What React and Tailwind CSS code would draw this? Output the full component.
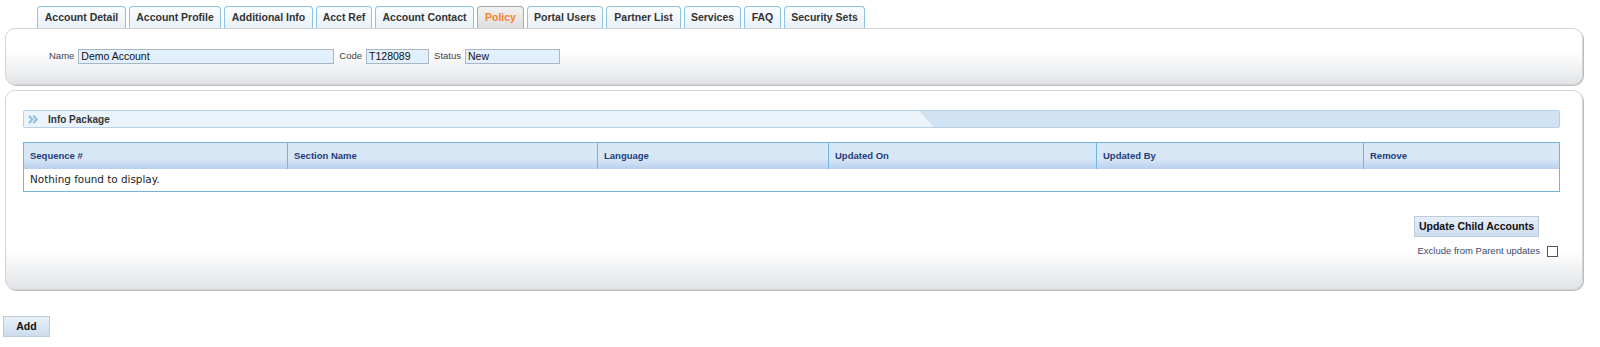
import React from 'react';

const tabs = [
  { label: 'Account Detail', w: 'w-[89px]' },
  { label: 'Account Profile', w: 'w-[92px]' },
  { label: 'Additional Info', w: 'w-[89px]' },
  { label: 'Acct Ref', w: 'w-[56px]' },
  { label: 'Account Contact', w: 'w-[99px]' },
  { label: 'Policy', w: 'w-[47px]', active: true },
  { label: 'Portal Users', w: 'w-[76px]' },
  { label: 'Partner List', w: 'w-[75px]' },
  { label: 'Services', w: 'w-[57px]' },
  { label: 'FAQ', w: 'w-[37px]' },
  { label: 'Security Sets', w: 'w-[81px]' },
];

const columns = [
  { label: 'Sequence #', w: 'w-[264px]' },
  { label: 'Section Name', w: 'w-[310px]' },
  { label: 'Language', w: 'w-[231px]' },
  { label: 'Updated On', w: 'w-[268px]' },
  { label: 'Updated By', w: 'w-[267px]' },
  { label: 'Remove', w: '' },
];

function Chevrons() {
  return (
    <svg width="10" height="9" viewBox="0 0 10 9" className="shrink-0">
      <path d="M1 0.8 L4.2 4.5 L1 8.2" fill="none" stroke="#8cc2e2" strokeWidth="2.2" />
      <path d="M5.4 0.8 L8.6 4.5 L5.4 8.2" fill="none" stroke="#8cc2e2" strokeWidth="2.2" />
    </svg>
  );
}

function Field({ label, value, width }) {
  return (
    <>
      <span className="text-[9.5px] text-[#444] mr-[4px]">{label}</span>
      <div className={`${width} h-[15px] bg-[#e2effc] border border-[#a9b6c3] flex items-center px-[2px] text-[10.5px] text-[#111] leading-none mr-[5px]`}>
        {value}
      </div>
    </>
  );
}

export default function App() {
  return (
    <div className="w-full h-[347px] bg-white font-['Liberation_Sans',Arial,sans-serif] overflow-hidden">
      {/* Tabs */}
      <div className="flex gap-[3px] pl-[37px] pt-[6px]">
        {tabs.map((t) => (
          <div
            key={t.label}
            className={`${t.w} h-[22px] flex items-center justify-center rounded-t-[4px] border border-b-0 text-[10.5px] font-bold whitespace-nowrap ${
              t.active
                ? 'bg-linear-to-b from-[#f2f2f2] to-[#dedede] border-[#a8a8a8] text-[#f4822e]'
                : 'bg-linear-to-b from-[#fbfdff] to-[#e9f1f8] border-[#8dc2e4] text-[#333]'
            }`}
          >
            {t.label}
          </div>
        ))}
      </div>

      {/* Account header panel */}
      <div className="ml-[5px] w-[1578px] h-[57px] rounded-[10px] border border-[#d3d3d3] bg-linear-to-b from-white from-40% to-[#e1e4e7] shadow-[1px_1px_0_#bdbdbd] pl-[43px] pt-[20px]">
        <div className="flex items-center">
          <Field label="Name" value="Demo Account" width="w-[256px]" />
          <Field label="Code" value="T128089" width="w-[63px]" />
          <Field label="Status" value="New" width="w-[95px]" />
        </div>
      </div>

      {/* Info package panel */}
      <div className="ml-[5px] mt-[5px] w-[1578px] h-[200px] rounded-[10px] border border-[#d3d3d3] bg-linear-to-b from-white from-[80%] to-[#e1e4e7] shadow-[1px_1px_0_#bdbdbd] pl-[17px] pr-[22px] pt-[19px]">
        <div className="flex h-[18px] border border-[#b6d0e8] rounded-[2px] bg-[#d1e2f2] overflow-hidden">
          <div className="w-[895px] bg-[#ebf3fb] flex items-center gap-[10px] pl-[4px]">
            <Chevrons />
            <span className="text-[10px] font-bold text-[#333]">Info Package</span>
          </div>
          <svg width="15" height="16" viewBox="0 0 15 16" className="shrink-0">
            <polygon points="0,0 15,16 0,16" fill="#ebf3fb" />
          </svg>
          <div className="flex-1" />
        </div>

        <table className="mt-[14px] w-full table-fixed border-collapse border border-[#72b3df]">
          <thead>
            <tr className="h-[26px] bg-linear-to-b from-[#d8e7f6] from-60% to-[#b8d0ee]">
              {columns.map((c) => (
                <th
                  key={c.label}
                  className={`${c.w} border-l border-[#72b3df] first:border-l-0 text-left pl-[6px] text-[9.5px] font-bold text-[#1e3b7c]`}
                >
                  {c.label}
                </th>
              ))}
            </tr>
          </thead>
          <tbody>
            <tr className="h-[23px] bg-white">
              <td colSpan={6} className="pl-[6px] text-[10.4px] text-[#222] font-['DejaVu_Sans',Verdana,sans-serif]">
                Nothing found to display.
              </td>
            </tr>
          </tbody>
        </table>

        <div className="flex justify-end mt-[24px] mr-[21px]">
          <button className="w-[125px] h-[21px] border border-[#bccbd9] bg-linear-to-b from-[#e8f0f8] to-[#ccdcee] text-[10.5px] font-bold text-[#111]">
            Update Child Accounts
          </button>
        </div>
        <div className="flex justify-end items-center mt-[7px] mr-[2px]">
          <span className="text-[9.5px] text-[#3b4a6b]">Exclude from Parent updates</span>
          <span className="ml-[7px] w-[11px] h-[11px] border border-[#555] bg-white" />
        </div>
      </div>

      <div className="pl-[3px] mt-[23px]">
        <button className="w-[47px] h-[21px] border border-[#bccbd9] bg-linear-to-b from-[#e8f0f8] to-[#ccdcee] text-[10.5px] font-bold text-[#111]">
          Add
        </button>
      </div>
    </div>
  );
}
